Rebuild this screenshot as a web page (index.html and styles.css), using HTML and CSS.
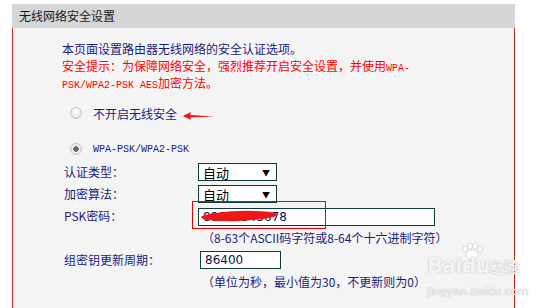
FILE: index.html
```html
<!DOCTYPE html>
<html lang="zh-CN">
<head>
    <meta charset="UTF-8">
    <title>无线网络安全设置</title>
    <link rel="stylesheet" href="styles.css">
</head>
<body>
    <div class="panel">
        <div class="panel-title">无线网络安全设置</div>
        <div class="panel-body">
            <p class="intro">本页面设置路由器无线网络的安全认证选项。</p>
            <p class="tip">安全提示：为保障网络安全，强烈推荐开启安全设置，并使用<span class="mono">WPA-</span><br><span class="mono">PSK/WPA2-PSK AES</span>加密方法。</p>

            <div class="radio-row first">
                <span class="radio"></span>
                <span class="radio-label">不开启无线安全</span>
                <svg class="arrow" width="32" height="10" viewBox="0 0 32 10">
                    <polygon points="0,5 8,1 7,4 31,5.5 7,6.5 8,9" fill="#f01010"/>
                </svg>
            </div>
            <div class="radio-row second">
                <span class="radio checked"></span>
                <span class="mono">WPA-PSK/WPA2-PSK</span>
            </div>

            <div class="form">
                <label>认证类型：</label>
                <div class="select"><span>自动</span><span class="caret">▼</span></div>

                <label>加密算法：</label>
                <div class="select"><span>自动</span><span class="caret">▼</span></div>

                <label>PSK密码：</label>
                <div class="psk">
                    <input class="text wide" type="text" value="88812345678">
                    <span class="scribble"></span>
                    <span class="mark"></span>
                </div>

                <span></span>
                <div class="hint">（8-63个ASCII码字符或8-64个十六进制字符）</div>

                <label>组密钥更新周期：</label>
                <input class="text short" type="text" value="86400">

                <span></span>
                <div class="hint">（单位为秒，最小值为30，不更新则为0）</div>
            </div>

            <div class="watermark">
                <div class="wm-logo">Bai<span class="paw">
                    <svg width="26" height="18" viewBox="0 0 26 18">
                        <ellipse cx="13" cy="12" rx="6" ry="5"/>
                        <ellipse cx="6" cy="6" rx="2.5" ry="3"/>
                        <ellipse cx="11" cy="3" rx="2.5" ry="3"/>
                        <ellipse cx="16" cy="3" rx="2.5" ry="3"/>
                        <ellipse cx="21" cy="6" rx="2.5" ry="3"/>
                    </svg></span>du<span class="wm-cn">经验</span></div>
                <div class="wm-url">jingyan.baidu.com</div>
            </div>
        </div>
    </div>
</body>
</html>
```

FILE: styles.css
```css
body {
    margin: 0;
    background: #ffffff;
    font-family: "Noto Sans CJK SC", "DejaVu Sans", sans-serif;
    font-size: 12px;
    color: #1c1c7c;
}

.panel {
    margin: 4px 0 0 12px;
    width: 503px;
}

.panel-title {
    height: 24px;
    line-height: 24px;
    background: #d6d6d6;
    color: #1a1a1a;
    padding-left: 7px;
    font-size: 12px;
}

.panel-body {
    position: relative;
    height: 280px;
    background: #f4f4f4;
    border-left: 1px solid #e0201c;
    border-right: 1px solid #d0201c;
    padding: 12px 0 0 49px;
    box-sizing: border-box;
}

p {
    margin: 0;
    line-height: 17px;
}

.tip {
    color: #ff0000;
}

.mono {
    font-family: "Liberation Mono", monospace;
    font-size: 10px;
    line-height: 1;
}

.radio-row {
    display: flex;
    align-items: center;
    height: 17px;
}

.radio-row.first {
    margin-top: 14px;
}

.radio-row.second {
    margin-top: 19px;
}

.radio {
    width: 10px;
    height: 10px;
    margin: -2px 11px 0 8px;
    border: 1px solid #c4c4c4;
    border-radius: 50%;
    background: radial-gradient(circle at 50% 35%, #ffffff, #dcdcdc);
    box-sizing: content-box;
}

.radio.checked {
    background: radial-gradient(circle, #6a6a6a 0 2.5px, #f2f2f2 3px, #d8d8d8);
}

.arrow {
    margin: 4px 0 0 6px;
}

.form {
    display: grid;
    grid-template-columns: 134px auto;
    align-items: center;
    row-gap: 4px;
    margin: 5px 0 0 2px;
}

label {
    color: #1c1c7c;
    line-height: 18px;
}

.select {
    width: 79px;
    height: 18px;
    border: 1px solid #0d3b37;
    background: #ffffff;
    box-sizing: border-box;
    display: flex;
    justify-content: space-between;
    align-items: center;
    padding: 0 6px 0 4px;
    color: #000000;
    font-size: 13px;
}

.caret {
    font-size: 8px;
}

.text {
    height: 18px;
    border: 1px solid #0d3b37;
    background: #ffffff;
    box-sizing: border-box;
    padding: 0 4px;
    font-family: "DejaVu Sans", sans-serif;
    font-size: 12px;
    color: #10105a;
    outline: none;
}

.wide {
    width: 237px;
}

.short {
    width: 81px;
    margin-left: 2px;
}

.psk {
    position: relative;
    height: 18px;
}

.scribble {
    position: absolute;
    left: 3px;
    top: 4px;
    width: 76px;
    height: 10px;
    border-radius: 50%;
    background: #f01616;
    transform: rotate(-2deg);
}

.mark {
    position: absolute;
    left: -6px;
    top: -6px;
    width: 134px;
    height: 28px;
    border: 1px solid #f00000;
    box-sizing: border-box;
}

.hint {
    line-height: 18px;
    margin-left: 4px;
}

.watermark {
    position: absolute;
    left: 414px;
    top: 214px;
    width: 100px;
    color: rgba(255, 255, 255, 0.85);
    text-shadow: 0 0 1px #bcbcbc, 0 0 1px #bcbcbc;
    font-family: "DejaVu Sans", sans-serif;
}

.wm-logo {
    font-size: 21px;
    font-weight: bold;
    line-height: 24px;
    letter-spacing: -1px;
    white-space: nowrap;
}

.paw {
    display: inline-block;
    width: 0;
    vertical-align: 12px;
}

.paw svg {
    margin-left: -2px;
    fill: rgba(255, 255, 255, 0.85);
    stroke: #c4c4c4;
    stroke-width: 0.6;
}

.wm-cn {
    font-family: "Noto Sans CJK SC", sans-serif;
    font-size: 15px;
    margin-left: 1px;
}

.wm-url {
    font-size: 11px;
    line-height: 14px;
    margin-top: 6px;
    white-space: nowrap;
}
```
